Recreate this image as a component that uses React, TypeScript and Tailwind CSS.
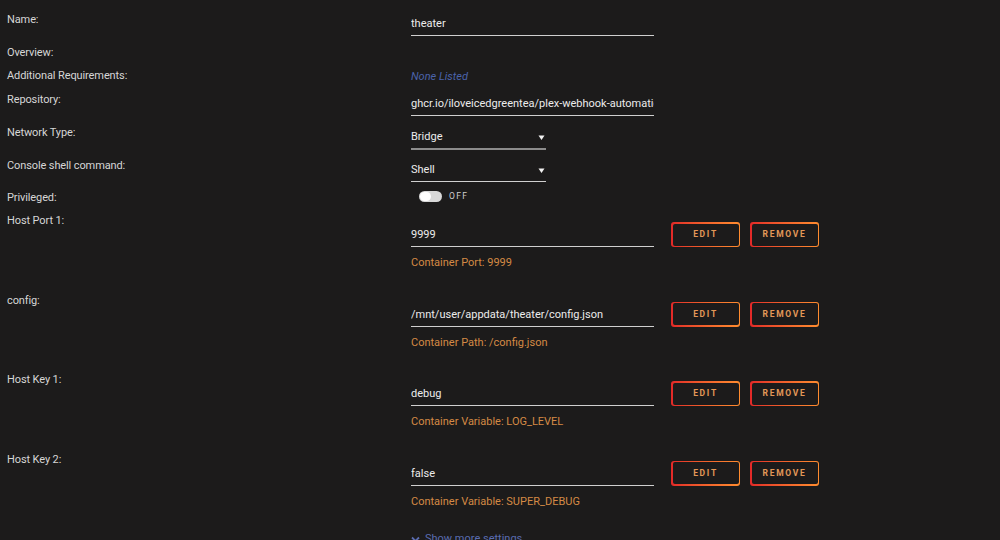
import React from "react";

const font = { fontFamily: 'Roboto, "Open Sans", sans-serif' };

function Label({ children }: { children: React.ReactNode }) {
  return (
    <div className="w-[411px] shrink-0 pl-[7px] text-[11px] leading-4 tracking-[-0.01em] text-[#d6d6d6]">{children}</div>
  );
}

function TextInput({ value }: { value: string }) {
  return (
    <div className="mt-1 w-[243px] border-b border-[#cfcfcf] pb-[3px] text-[11px] leading-4 text-[#ececec] whitespace-nowrap overflow-hidden">
      {value}
    </div>
  );
}

function Select({ value, thick }: { value: string; thick?: boolean }) {
  return (
    <div
      className={
        "mt-1 flex w-[135px] items-center justify-between text-[11px] leading-4 text-[#ececec] " +
        (thick ? "border-b-2 border-[#8c8c8c] pb-[3px]" : "border-b border-[#d0d0d0] pb-[3px]")
      }
    >
      <span>{value}</span>
      <svg width="7" height="7" viewBox="0 0 7 7" className="mr-[1px]">
        <path d="M0.5 1.5 L6.5 1.5 L3.5 6 Z" fill="#f2f2f2" />
      </svg>
    </div>
  );
}

function GradButton({ label }: { label: string }) {
  return (
    <div className="rounded-[3px] bg-gradient-to-r from-[#e22828] to-[#ff8c2f] p-[1.5px]">
      <div className="flex h-[22px] w-[66px] items-center justify-center rounded-[2px] bg-[#1c1b1b] text-[8.5px] font-bold tracking-[0.2em] text-[#e39858]">
        {label}
      </div>
    </div>
  );
}

function MappingRow({ label, value, note }: { label: string; value: string; note: string }) {
  return (
    <div className="flex h-[79.5px] items-start">
      <Label>{label}</Label>
      <div className="flex flex-col">
        <div className="flex items-start">
          <div className="mt-[10px]">
            <TextInput value={value} />
          </div>
          <div className="ml-[17px] mt-[9px] flex gap-[10px]">
            <GradButton label="EDIT" />
            <GradButton label="REMOVE" />
          </div>
        </div>
        <div className="mt-[8px] text-[11px] leading-4 text-[#d48a45]">{note}</div>
      </div>
    </div>
  );
}

export default function App() {
  return (
    <div className="h-[540px] w-[1000px] overflow-hidden bg-[#1c1b1b] pt-[12px]" style={font}>
      <div className="flex h-[33px] items-start">
        <Label>Name:</Label>
        <TextInput value="theater" />
      </div>
      <div className="flex h-[23px] items-start">
        <Label>Overview:</Label>
      </div>
      <div className="flex h-[24px] items-start">
        <Label>Additional Requirements:</Label>
        <div className="mt-[1px] text-[11px] italic leading-4 text-[#4b63aa]">None Listed</div>
      </div>
      <div className="flex h-[33px] items-start">
        <Label>Repository:</Label>
        <TextInput value="ghcr.io/iloveicedgreentea/plex-webhook-automation" />
      </div>
      <div className="flex h-[33px] items-start">
        <Label>Network Type:</Label>
        <Select value="Bridge" thick />
      </div>
      <div className="flex h-[32px] items-start">
        <Label>Console shell command:</Label>
        <Select value="Shell" />
      </div>
      <div className="flex h-[23px] items-start">
        <Label>Privileged:</Label>
        <div className="ml-[8px] mt-[1px] flex h-[11px] items-center gap-[7px]">
          <div className="relative h-[11px] w-[23px] rounded-full bg-[#d8d8d8]">
            <div className="absolute left-[1px] top-[1px] h-[9px] w-[11px] rounded-full bg-white" />
          </div>
          <span className="text-[8.5px] tracking-[0.16em] text-[#cfcfcf]">OFF</span>
        </div>
      </div>
      <MappingRow label="Host Port 1:" value="9999" note="Container Port: 9999" />
      <MappingRow label="config:" value="/mnt/user/appdata/theater/config.json" note="Container Path: /config.json" />
      <MappingRow label="Host Key 1:" value="debug" note="Container Variable: LOG_LEVEL" />
      <MappingRow label="Host Key 2:" value="false" note="Container Variable: SUPER_DEBUG" />
      <div className="flex items-start">
        <div className="w-[411px] shrink-0" />
        <div className="mt-0 flex items-center gap-[5px] text-[11px] leading-4 text-[#5a6cb0]">
          <svg width="9" height="7" viewBox="0 0 9 7">
            <path d="M1 1.5 L4.5 5 L8 1.5" stroke="#5a6cb0" strokeWidth="1.8" fill="none" />
          </svg>
          <span>Show more settings</span>
        </div>
      </div>
    </div>
  );
}
